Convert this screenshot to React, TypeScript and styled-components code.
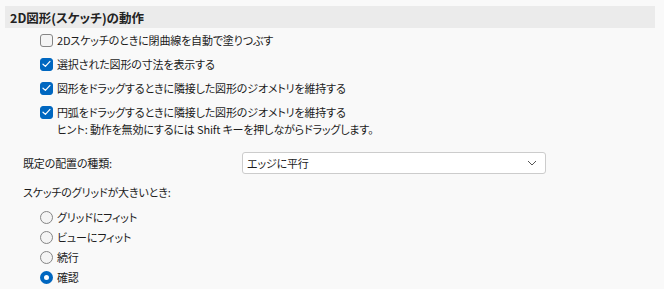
import React from 'react';
import styled, { createGlobalStyle } from 'styled-components';

const GlobalStyle = createGlobalStyle`
  html, body {
    margin: 0;
    padding: 0;
    background: #f9f9f9;
  }
  body {
    font-family: 'Noto Sans CJK JP', 'Noto Sans', sans-serif;
    font-feature-settings: 'palt';
    color: #1b1b1b;
    font-size: 11px;
    letter-spacing: -0.15px;
  }
`;

const Page = styled.div`
  width: 664px;
  height: 289px;
  box-sizing: border-box;
  padding: 6px 9px 0 5px;
`;

const SectionHeader = styled.div`
  height: 22px;
  background: #ebebeb;
  padding-left: 5px;
  display: flex;
  align-items: center;
  font-size: 12.5px;
  font-weight: bold;
  letter-spacing: 0;
  color: #222;
`;

const CheckList = styled.div`
  display: flex;
  flex-direction: column;
  gap: 6px;
  padding: 3px 0 0 35px;
`;

const OptionRow = styled.label`
  display: flex;
  align-items: center;
  gap: 4px;
  height: 18px;
  white-space: nowrap;
`;

const Box = styled.span<{ $checked?: boolean }>`
  width: 13px;
  height: 13px;
  box-sizing: border-box;
  border-radius: 3px;
  flex-shrink: 0;
  display: flex;
  align-items: center;
  justify-content: center;
  background: ${(p) => (p.$checked ? '#0067c0' : '#f4f4f4')};
  border: 1px solid ${(p) => (p.$checked ? '#0067c0' : '#858585')};
`;

const Hint = styled.div`
  padding-left: 17px;
  margin-top: -6px;
  height: 16px;
  line-height: 16px;
  white-space: nowrap;
`;

const FieldRow = styled.div`
  display: grid;
  grid-template-columns: 219px 304px;
  align-items: center;
  margin: 15px 0 0 18px;
`;

const SelectBox = styled.div`
  height: 22px;
  box-sizing: border-box;
  border: 1px solid #cccccc;
  border-radius: 3px;
  background: #ffffff;
  display: flex;
  align-items: center;
  justify-content: space-between;
  padding: 0 8px 0 4px;
`;

const GroupLabel = styled.div`
  margin: 10px 0 0 18px;
  height: 16px;
  line-height: 16px;
`;

const RadioList = styled.div`
  display: flex;
  flex-direction: column;
  padding: 7px 0 0 35px;
`;

const RadioRow = styled.label`
  display: flex;
  align-items: center;
  gap: 4px;
  height: 20px;
`;

const RadioDot = styled.span<{ $checked?: boolean }>`
  width: 13px;
  height: 13px;
  box-sizing: border-box;
  border-radius: 50%;
  flex-shrink: 0;
  background: ${(p) => (p.$checked ? '#ffffff' : '#f4f4f4')};
  border: ${(p) => (p.$checked ? '4px solid #0067c0' : '1px solid #858585')};
`;

const Check = () => (
  <svg width="9" height="8" viewBox="0 0 9 8">
    <path d="M1 4.2 L3.4 6.4 L8 1.4" fill="none" stroke="#fff" strokeWidth="1.2" strokeLinecap="round" strokeLinejoin="round" />
  </svg>
);

const Chevron = () => (
  <svg width="10" height="6" viewBox="0 0 10 6">
    <path d="M1 1 L5 5 L9 1" fill="none" stroke="#555" strokeWidth="1" />
  </svg>
);

const checks = [
  { label: '2Dスケッチのときに閉曲線を自動で塗りつぶす', checked: false },
  { label: '選択された図形の寸法を表示する', checked: true },
  { label: '図形をドラッグするときに隣接した図形のジオメトリを維持する', checked: true },
  { label: '円弧をドラッグするときに隣接した図形のジオメトリを維持する', checked: true },
];

const radios = [
  { label: 'グリッドにフィット', checked: false },
  { label: 'ビューにフィット', checked: false },
  { label: '続行', checked: false },
  { label: '確認', checked: true },
];

const App = () => (
  <Page>
    <GlobalStyle />
    <SectionHeader>2D図形(スケッチ)の動作</SectionHeader>
    <CheckList>
      {checks.map((c) => (
        <OptionRow key={c.label}>
          <Box $checked={c.checked}>{c.checked && <Check />}</Box>
          {c.label}
        </OptionRow>
      ))}
      <Hint>ヒント: 動作を無効にするには Shift キーを押しながらドラッグします。</Hint>
    </CheckList>
    <FieldRow>
      <span>既定の配置の種類:</span>
      <SelectBox>
        <span>エッジに平行</span>
        <Chevron />
      </SelectBox>
    </FieldRow>
    <GroupLabel>スケッチのグリッドが大きいとき:</GroupLabel>
    <RadioList>
      {radios.map((r) => (
        <RadioRow key={r.label}>
          <RadioDot $checked={r.checked} />
          {r.label}
        </RadioRow>
      ))}
    </RadioList>
  </Page>
);

export default App;
